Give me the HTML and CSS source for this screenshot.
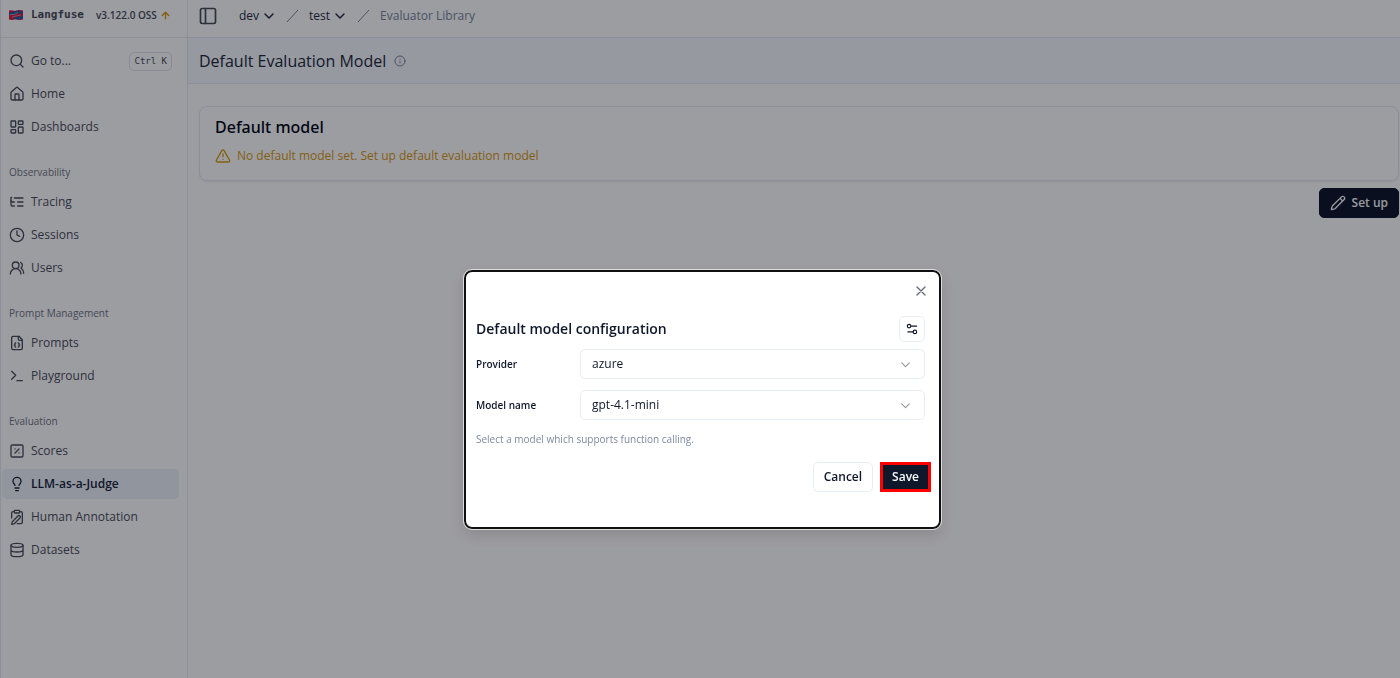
FILE: index.html
```html
<!DOCTYPE html>
<html lang="en">
<head>
<meta charset="utf-8">
<title>Langfuse</title>
<link rel="stylesheet" href="styles.css">
</head>
<body>
<div class="app">
  <aside class="sidebar">
    <div class="brand">
      <svg class="logo" viewBox="0 0 16 12"><path fill="#d8203f" d="M1 1.500q3-.5 6 .5 4-1.500 8-.5v9q-4 1-7-.5-4 1.500-7 .5z"/><path fill="#1d5fa8" d="M5 3q4-2 7-1l3 1-1 2-4-1-4 2-5 0V4zM5 9l4-1 6-1v2q-3 2-7 1.500z"/><path d="M2 5.500h4l4-2M4 8l4-1 5-1" fill="none" stroke="#c8a8c0" stroke-width=".8"/></svg>
      <strong class="brand-name">Langfuse</strong>
      <span class="version">v3.122.0 OSS</span>
      <svg class="icon up" viewBox="0 0 24 24"><path d="m5 12 7-7 7 7M12 19V5"/></svg>
    </div>
    <nav class="nav">
      <div class="group">
        <a class="item" href="#"><svg class="icon" viewBox="0 0 24 24"><circle cx="11" cy="11" r="8"/><path d="m21 21-4.3-4.3"/></svg>Go to...<kbd class="keys">Ctrl K</kbd></a>
        <a class="item" href="#"><svg class="icon" viewBox="0 0 24 24"><path d="M15 21v-8a1 1 0 0 0-1-1h-4a1 1 0 0 0-1 1v8"/><path d="M3 10a2 2 0 0 1 .7-1.5l7-6a2 2 0 0 1 2.6 0l7 6A2 2 0 0 1 21 10v9a2 2 0 0 1-2 2H5a2 2 0 0 1-2-2z"/></svg>Home</a>
        <a class="item" href="#"><svg class="icon" viewBox="0 0 24 24"><rect width="7" height="9" x="3" y="3" rx="1"/><rect width="7" height="5" x="14" y="3" rx="1"/><rect width="7" height="9" x="14" y="12" rx="1"/><rect width="7" height="5" x="3" y="16" rx="1"/></svg>Dashboards</a>
      </div>
      <div class="group">
        <h2 class="label">Observability</h2>
        <a class="item" href="#"><svg class="icon" viewBox="0 0 24 24"><path d="M21 12h-8M21 6H8M21 18h-8M3 6v4c0 1.100.9 2 2 2h3"/><path d="M3 10v6c0 1.100.9 2 2 2h3M3 5h1"/></svg>Tracing</a>
        <a class="item" href="#"><svg class="icon" viewBox="0 0 24 24"><circle cx="12" cy="12" r="10"/><path d="M12 6v6l4 2"/></svg>Sessions</a>
        <a class="item" href="#"><svg class="icon" viewBox="0 0 24 24"><path d="M18 21a8 8 0 0 0-16 0"/><circle cx="10" cy="8" r="5"/><path d="M22 20c0-3.370-2-6.500-4-8a5 5 0 0 0-.45-8.300"/></svg>Users</a>
      </div>
      <div class="group">
        <h2 class="label">Prompt Management</h2>
        <a class="item" href="#"><svg class="icon" viewBox="0 0 24 24"><path d="M15 2H6a2 2 0 0 0-2 2v16a2 2 0 0 0 2 2h12a2 2 0 0 0 2-2V7Z"/><path d="M14 2v4a2 2 0 0 0 2 2h4M10 12a1 1 0 0 0-1 1v1a1 1 0 0 1-1 1 1 1 0 0 1 1 1v1a1 1 0 0 0 1 1M14 18a1 1 0 0 0 1-1v-1a1 1 0 0 1 1-1 1 1 0 0 1-1-1v-1a1 1 0 0 0-1-1"/></svg>Prompts</a>
        <a class="item" href="#"><svg class="icon" viewBox="0 0 24 24"><path d="m4 17 6-6-6-6M12 19h8"/></svg>Playground</a>
      </div>
      <div class="group">
        <h2 class="label">Evaluation</h2>
        <a class="item" href="#"><svg class="icon" viewBox="0 0 24 24"><rect width="18" height="18" x="3" y="3" rx="2"/><path d="m15 9-6 6M9 9h.01M15 15h.01"/></svg>Scores</a>
        <a class="item active" href="#"><svg class="icon" viewBox="0 0 24 24"><path d="M15 14c.2-1 .7-1.700 1.500-2.500 1-.9 1.500-2.200 1.500-3.500A6 6 0 0 0 6 8c0 1 .2 2.200 1.500 3.500.7.7 1.300 1.500 1.500 2.500M9 18h6M10 22h4"/></svg>LLM-as-a-Judge</a>
        <a class="item" href="#"><svg class="icon" viewBox="0 0 24 24"><rect width="8" height="4" x="8" y="2" rx="1"/><path d="M16 4h2a2 2 0 0 1 2 2v14a2 2 0 0 1-2 2h-5.500M4 13.500V6a2 2 0 0 1 2-2h2"/><path d="M13.400 10.600a2 2 0 1 1 3 3L8 22l-4 1 1-4z"/></svg>Human Annotation</a>
        <a class="item" href="#"><svg class="icon" viewBox="0 0 24 24"><ellipse cx="12" cy="5" rx="9" ry="3"/><path d="M3 5v14a9 3 0 0 0 18 0V5M3 12a9 3 0 0 0 18 0"/></svg>Datasets</a>
      </div>
    </nav>
  </aside>

  <main class="main">
    <header class="topbar">
      <button class="bare" aria-label="Toggle sidebar"><svg class="icon panel" viewBox="0 0 24 24"><rect width="18" height="18" x="3" y="3" rx="2"/><path d="M9 3v18"/></svg></button>
      <nav class="crumbs" aria-label="Breadcrumb">
        <button class="bare crumb">dev<svg class="icon chev" viewBox="0 0 24 24"><path d="m4 8 8 8 8-8"/></svg></button>
        <svg class="slash" viewBox="0 0 12 12"><path d="M1 12 12 0"/></svg>
        <button class="bare crumb">test<svg class="icon chev" viewBox="0 0 24 24"><path d="m4 8 8 8 8-8"/></svg></button>
        <svg class="slash" viewBox="0 0 12 12"><path d="M1 12 12 0"/></svg>
        <a class="here" href="#">Evaluator Library</a>
      </nav>
    </header>
    <div class="titlebar">
      <h1 class="title">Default Evaluation Model</h1>
      <svg class="icon info" viewBox="0 0 24 24"><circle cx="12" cy="12" r="10"/><path d="M12 16v-4M12 8h.01"/></svg>
    </div>
    <div class="content">
      <section class="card">
        <h2 class="card-title">Default model</h2>
        <p class="warning"><svg class="icon" viewBox="0 0 24 24"><path d="m21.700 18-8-14a2 2 0 0 0-3.500 0l-8 14A2 2 0 0 0 4 21h16a2 2 0 0 0 1.700-3M12 9v4M12 17h.01"/></svg>No default model set. Set up default evaluation model</p>
      </section>
      <button class="btn primary"><svg class="icon" viewBox="0 0 24 24"><path d="M21.200 6.800a1 1 0 0 0-4-4L3.800 16.200a2 2 0 0 0-.5.800L2 21.400a.5.5 0 0 0 .6.600L7 20.700a2 2 0 0 0 .8-.5zM15 5l4 4"/></svg>Set up</button>
    </div>
  </main>
</div>

<div class="overlay">
  <form class="dialog" role="dialog" aria-labelledby="dialog-title">
    <button type="button" class="bare close" aria-label="Close"><svg class="icon" viewBox="0 0 24 24"><path d="M18 6 6 18M6 6l12 12"/></svg></button>
    <div class="dialog-head">
      <h2 class="dialog-title" id="dialog-title">Default model configuration</h2>
      <button type="button" class="btn square" aria-label="Model parameters"><svg class="icon" viewBox="0 0 24 24"><path d="M20 7h-9M14 17H5"/><circle cx="17" cy="17" r="3"/><circle cx="7" cy="7" r="3"/></svg></button>
    </div>
    <div class="field">
      <label for="provider">Provider</label>
      <div class="pick"><select id="provider"><option>azure</option></select><svg class="icon" viewBox="0 0 24 24"><path d="m5 9 7 7 7-7"/></svg></div>
    </div>
    <div class="field">
      <label for="model">Model name</label>
      <div class="pick"><select id="model"><option>gpt-4.1-mini</option></select><svg class="icon" viewBox="0 0 24 24"><path d="m5 9 7 7 7-7"/></svg></div>
    </div>
    <p class="hint">Select a model which supports function calling.</p>
    <div class="actions">
      <button type="button" class="btn">Cancel</button>
      <button type="button" class="btn primary save">Save</button>
    </div>
  </form>
</div>
</body>
</html>
```
FILE: styles.css
```css
* { box-sizing: border-box; }
body {
  margin: 0;
  font-family: "Open Sans", "Noto Sans", sans-serif;
  font-size: 12px;
  line-height: 16px;
  color: #020817;
  background: #fff;
}
h1, h2, p { margin: 0; }
a { color: inherit; text-decoration: none; }
button, select { font: inherit; color: inherit; }
.icon {
  width: 16px;
  height: 16px;
  flex: none;
  fill: none;
  stroke: currentColor;
  stroke-width: 2;
  stroke-linecap: round;
  stroke-linejoin: round;
}
.bare { display: flex; align-items: center; padding: 0; border: 0; background: none; }

.app { display: flex; min-height: 100vh; }
.sidebar {
  width: 188px;
  flex: none;
  border: solid #e5e9f0;
  border-width: 0 1px;
  color: #4b4e5c;
}
.brand {
  display: flex;
  align-items: center;
  height: 38px;
  padding: 0 7px 7px;
  border-bottom: 1px solid #e2e8f0;
  white-space: nowrap;
}
.logo { width: 16px; height: 12px; margin-right: 7px; }
.brand-name { font: 700 11px/16px "DejaVu Sans Mono", monospace; margin-right: 12px; }
.version { font-size: 10px; font-weight: 600; margin-right: 3px; }
.up { width: 11px; height: 11px; color: #d99a14; stroke-width: 3; }
.nav { padding: 8px 8px 8px 1px; }
.group { display: grid; gap: 3px; margin-bottom: 18px; }
.label { font-size: 10px; line-height: 24px; font-weight: 500; padding: 0 7px; color: #717584; }
.item {
  display: flex;
  align-items: center;
  gap: 6px;
  height: 30px;
  padding: 0 7px;
  border-radius: 5px;
}
.item.active { background: #ebf2fb; color: #20263a; font-weight: 600; }
.keys {
  margin-left: auto;
  padding: 0 4px;
  border: 1px solid #dbe2ec;
  border-radius: 5px;
  font: 9px/17px "DejaVu Sans Mono", monospace;
}

.main { flex: 1; min-width: 0; }
.topbar {
  display: flex;
  align-items: center;
  gap: 21px;
  height: 38px;
  padding: 0 10px 6px;
  border-bottom: 1px solid #e2e8f0;
}
.panel { width: 20px; height: 20px; color: #4b4e5c; }
.crumbs { display: flex; align-items: center; gap: 11px; }
.crumb { gap: 4px; font-weight: 500; color: #272c3e; }
.chev { width: 12px; height: 12px; stroke-width: 3; }
.slash { width: 12px; height: 12px; fill: none; stroke: #78859b; }
.here { color: #78859b; }
.titlebar {
  display: flex;
  align-items: center;
  gap: 8px;
  height: 46px;
  padding: 0 11px;
  border-bottom: 1px solid #e2e8f0;
  background: #f5f8fd;
}
.title { font-size: 16px; line-height: 24px; font-weight: 500; color: #262b3c; }
.info { width: 12px; height: 12px; color: #78859b; }
.content { display: flex; flex-direction: column; align-items: flex-end; gap: 7px; padding: 22px 1px 0 11px; }
.card {
  width: 100%;
  padding: 8px 15px 16px;
  border: 1px solid #e2e8f0;
  border-radius: 8px;
  box-shadow: 0 1px 2px rgba(0, 0, 0, .08);
}
.card-title { font-family: "Noto Sans", sans-serif; font-size: 16px; line-height: 24px; font-weight: 500; }
.warning { display: flex; align-items: center; gap: 6px; margin-top: 9px; color: #d99a14; }

.btn {
  display: flex;
  align-items: center;
  justify-content: center;
  gap: 6px;
  height: 30px;
  padding: 0 10px;
  border: 1px solid #e8edf4;
  border-radius: 5px;
  background: #fff;
  font-weight: 600;
}
.primary { border-color: #0f172a; background: #0f172a; color: #f8fafc; }

.overlay {
  position: fixed;
  inset: 0;
  display: flex;
  align-items: flex-start;
  justify-content: center;
  padding: 270px 0 0 5px;
  background: rgba(1, 3, 12, .39);
}
.dialog {
  display: flex;
  flex-direction: column;
  width: 477px;
  padding: 11px 14px 35px 10px;
  border: 2px solid #101010;
  border-radius: 8px;
  outline: 1px solid #dcdcdc;
  background: #fff;
  color: #0f172a;
  box-shadow: 0 6px 14px rgba(0, 0, 0, .12);
}
.close { align-self: flex-end; color: #666b78; margin-right: -4px; }
.dialog-head { display: flex; align-items: center; justify-content: space-between; margin: 17px 0 7px; }
.dialog-title { font-size: 14px; line-height: 20px; font-weight: 600; }
.square { width: 26px; height: 26px; padding: 0; }
.square .icon { width: 14px; height: 14px; }
.field { display: grid; grid-template-columns: 104px 1fr; align-items: center; margin-bottom: 11px; }
.field label { font-size: 10px; font-weight: 600; }
.pick { display: flex; align-items: center; position: relative; }
.pick select {
  appearance: none;
  width: 100%;
  height: 30px;
  padding: 0 11px;
  border: 1px solid #e8edf4;
  border-radius: 5px;
  background: #fff;
}
.pick .icon { position: absolute; right: 13px; width: 13px; height: 13px; color: #92959e; pointer-events: none; }
.hint { font-size: 10px; color: #7c8aa2; }
.actions { display: flex; justify-content: flex-end; gap: 7px; margin: 15px -6px 0 0; }
.save { border: 3px solid #f00; border-radius: 0; padding: 0 9px; }
```
